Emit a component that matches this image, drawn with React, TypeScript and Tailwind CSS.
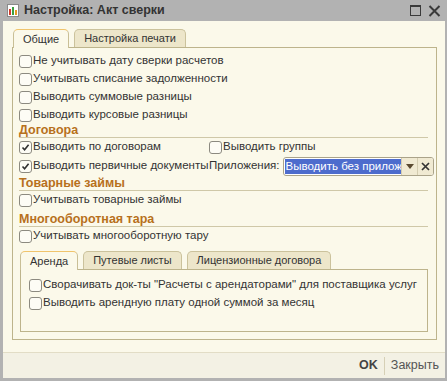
const font = { fontFamily: '"Liberation Sans", Arial, sans-serif' };

const Check = ({ checked = false }: { checked?: boolean }) => (
  <span className="flex h-[13px] w-[13px] shrink-0 items-center justify-center rounded-[3px] border border-[#8c8a80] bg-[#fdfcf5]">
    {checked && (
      <svg width="9" height="9" viewBox="0 0 9 9">
        <path d="M1.5 4.5 L3.6 6.8 L7.6 1.8" fill="none" stroke="#303030" strokeWidth="1.6" />
      </svg>
    )}
  </span>
);

const Row = ({ label, checked }: { label: string; checked?: boolean }) => (
  <label className="flex h-[18px] items-center gap-[1px] whitespace-nowrap text-[11.5px] text-[#333]">
    <Check checked={checked} />
    <span>{label}</span>
  </label>
);

const Header = ({ title, className = "" }: { title: string; className?: string }) => (
  <div className={`h-[15px] border-b border-[#cfc8a8] text-[12.5px] font-bold leading-[15px] text-[#b7701c] ${className}`}>
    {title}
  </div>
);

const Tab = ({ label, active }: { label: string; active?: boolean }) => (
  <div
    className={
      active
        ? "relative z-10 -mb-px flex h-[19px] items-center whitespace-nowrap rounded-t-[5px] border border-b-0 border-[#c9bf96] border-t-[#f0c46c] bg-[#fbf9ea] px-[9px] text-[11px] text-[#333]"
        : "flex h-[18px] items-center whitespace-nowrap rounded-t-[5px] border border-b-0 border-[#cbc29c] bg-[#ede6ca] px-[9px] text-[11px] text-[#333]"
    }
  >
    {label}
  </div>
);

export default function App() {
  return (
    <div className="flex h-[381px] w-[447px] flex-col bg-[#b2b2b2]" style={font}>
      {/* Title bar */}
      <div className="flex h-[21px] items-center pl-[7px] pr-[6px]">
        <svg width="12" height="13" viewBox="0 0 12 13" className="mr-[5px]">
          <rect x="0.5" y="0.5" width="11" height="12" fill="#fff" stroke="#8a8a8a" />
          <rect x="2" y="5" width="2" height="6" fill="#d23b2b" />
          <rect x="5" y="3" width="2" height="8" fill="#3aa040" />
          <rect x="8" y="6" width="2" height="5" fill="#e39a22" />
        </svg>
        <span className="text-[12.5px] font-bold text-[#333]">Настройка: Акт сверки</span>
        <div className="ml-auto flex items-center gap-[7px]">
          <span className="h-[11px] w-[11px] border-[1.5px] border-t-[2px] border-[#3a3a3a]" />
          <svg width="13" height="12" viewBox="0 0 13 12">
            <path d="M1.5 1 L11.5 11 M11.5 1 L1.5 11" stroke="#3a3a3a" strokeWidth="2" />
          </svg>
        </div>
      </div>

      {/* Body */}
      <div className="mb-[3px] ml-[3px] mr-[2px] flex flex-1 flex-col bg-[#fbf9ea]">
        <div className="flex flex-col pl-[9px] pr-[8px] pt-[8px]">
          <div className="flex gap-[5px] pl-[1px]">
            <Tab label="Общие" active />
            <Tab label="Настройка печати" />
          </div>
          <div className="flex h-[293px] flex-col border border-[#bdb48c] pl-[6px] pr-[8px] pt-[4px]">
            <Row label="Не учитывать дату сверки расчетов" />
            <Row label="Учитывать списание задолженности" />
            <Row label="Выводить суммовые разницы" />
            <Row label="Выводить курсовые разницы" />

            <Header title="Договора" className="-mt-[1px]" />
            <div className="flex">
              <div className="w-[190px] shrink-0">
                <Row label="Выводить по договорам" checked />
              </div>
              <Row label="Выводить группы" />
            </div>
            <div className="flex h-[20px] items-center">
              <div className="w-[190px] shrink-0">
                <Row label="Выводить первичные документы" checked />
              </div>
              <span className="whitespace-nowrap text-[11.5px] text-[#333]">Приложения:</span>
              <div className="ml-[4px] flex h-[19px] w-[151px] shrink-0 items-stretch overflow-hidden rounded-[3px] border border-[#aaa389] bg-white">
                <div className="flex min-w-0 flex-1 items-center overflow-hidden whitespace-nowrap pl-[1px]">
                  <span className="bg-[#4d6ccd] pr-[1px] text-[11.5px] leading-[15px] text-white">Выводить без приложений</span>
                </div>
                <div className="flex w-[16px] shrink-0 items-center justify-center border-l border-[#d4cdb0] bg-[#f0ead2]">
                  <svg width="8" height="5" viewBox="0 0 8 5">
                    <path d="M0 0 H8 L4 5 Z" fill="#5a4a30" />
                  </svg>
                </div>
                <div className="flex w-[16px] shrink-0 items-center justify-center border-l border-[#d4cdb0] bg-[#f0ead2]">
                  <svg width="9" height="9" viewBox="0 0 9 9">
                    <path d="M1 1 L8 8 M8 1 L1 8" stroke="#333" strokeWidth="1.7" />
                  </svg>
                </div>
              </div>
            </div>

            <Header title="Товарные займы" />
            <Row label="Учитывать товарные займы" />
            <Header title="Многооборотная тара" className="mt-[3px]" />
            <Row label="Учитывать многооборотную тару" />

            {/* Inner tabs */}
            <div className="mt-[6px] flex flex-col pl-[1px]">
              <div className="flex gap-[5px]">
                <Tab label="Аренда" active />
                <Tab label="Путевые листы" />
                <Tab label="Лицензионные договора" />
              </div>
              <div className="flex h-[63px] flex-col border border-[#bdb48c] pl-[8px] pt-[6px]">
                <Row label='Сворачивать док-ты "Расчеты с арендаторами" для поставщика услуг' />
                <Row label="Выводить арендную плату одной суммой за месяц" />
              </div>
            </div>
          </div>
        </div>

        {/* Footer */}
        <div className="mt-auto flex h-[26px] items-center justify-end border-t border-[#e2ddc6] bg-[#f3f1e4] pr-[6px] text-[12.5px]">
          <span className="font-bold text-[#444]">OK</span>
          <span className="mx-[6px] h-[18px] w-px bg-[#d6d0b6]" />
          <span className="text-[#555]">Закрыть</span>
        </div>
      </div>
    </div>
  );
}
